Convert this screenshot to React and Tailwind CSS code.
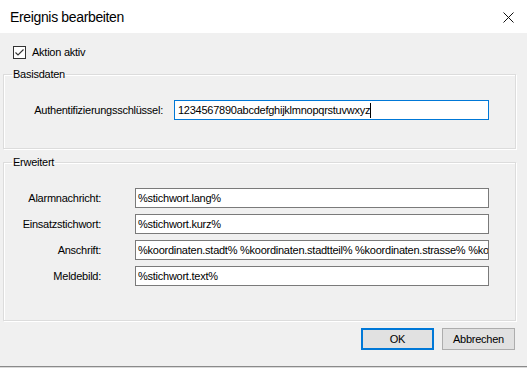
const FIELDS = [
  { label: 'Alarmnachricht:', value: '%stichwort.lang%' },
  { label: 'Einsatzstichwort:', value: '%stichwort.kurz%' },
  {
    label: 'Anschrift:',
    value: '%koordinaten.stadt% %koordinaten.stadtteil% %koordinaten.strasse% %koordinaten.hausnummer%',
  },
  { label: 'Meldebild:', value: '%stichwort.text%' },
]

function TextBox({ value, focused, className = '' }) {
  return (
    <div
      className={`h-[20px] bg-white border flex items-center overflow-hidden whitespace-nowrap ${
        focused ? 'border-[#0078d7] pl-[3px]' : 'border-[#7a7a7a] pl-[2px]'
      } ${className}`}
    >
      <span>{value}</span>
      {focused && <span className="inline-block w-px h-[15px] bg-black" />}
    </div>
  )
}

function Group({ title, className = '', children }) {
  return (
    <fieldset
      className={`border border-[#dcdcdc] shadow-[inset_1px_1px_0_#ffffff,1px_1px_0_#ffffff] ${className}`}
    >
      <legend className="ml-[8px] px-[1px] leading-[13px]">{title}</legend>
      {children}
    </fieldset>
  )
}

export default function App() {
  return (
    <div className="w-[527px] h-[368px] flex flex-col bg-[#f0f0f0] text-black text-[11px] tracking-[-0.25px] font-['Liberation_Sans',Arial,sans-serif] overflow-hidden">
      <div className="h-[33px] shrink-0 bg-white flex items-center justify-between pl-[10px] pr-[13px]">
        <span className="text-[14px] tracking-[-0.35px] mt-[1px]">Ereignis bearbeiten</span>
        <svg width="11" height="11" viewBox="0 0 11 11" className="mt-[1px]">
          <path d="M0.5 0.5 L10.5 10.5 M10.5 0.5 L0.5 10.5" stroke="#111" strokeWidth="1" />
        </svg>
      </div>

      <div className="h-[333px] shrink-0 flex flex-col pl-[3px] pr-[11px]">
        <div className="mt-[13px] ml-[10px] h-[13px] flex items-center gap-[6px]">
          <div className="w-[13px] h-[13px] border border-[#333] bg-white flex items-center justify-center">
            <svg width="11" height="11" viewBox="0 0 11 11">
              <path d="M1.5 5.5 L4 8 L9.5 2.5" fill="none" stroke="#333" strokeWidth="1.1" />
            </svg>
          </div>
          <span>Aktion aktiv</span>
        </div>

        <Group title="Basisdaten" className="mt-[9px] pb-[28px]">
          <div className="mt-[19px] flex items-center">
            <span className="w-[159px] text-right">Authentifizierungsschlüssel:</span>
            <TextBox value="1234567890abcdefghijklmnopqrstuvwxyz" focused className="ml-[11px] w-[315px]" />
          </div>
        </Group>

        <Group title="Erweitert" className="mt-[7px] pb-[34px]">
          <div className="mt-[19px] flex flex-col gap-[6px]">
            {FIELDS.map(({ label, value }) => (
              <div key={label} className="flex items-center">
                <span className="w-[97px] text-right">{label}</span>
                <TextBox value={value} className="ml-[34px] w-[354px]" />
              </div>
            ))}
          </div>
        </Group>

        <div className="mt-[7px] flex justify-end gap-[8px] pr-px">
          <button className="w-[73px] h-[22px] bg-[#e1e1e1] border-2 border-[#0078d7] flex items-center justify-center">
            OK
          </button>
          <button className="w-[73px] h-[22px] bg-[#e1e1e1] border border-[#adadad] flex items-center justify-center">
            Abbrechen
          </button>
        </div>
      </div>
      <div className="h-px bg-[#8a8a8a]" />
      <div className="h-px bg-[#dadada]" />
    </div>
  )
}
